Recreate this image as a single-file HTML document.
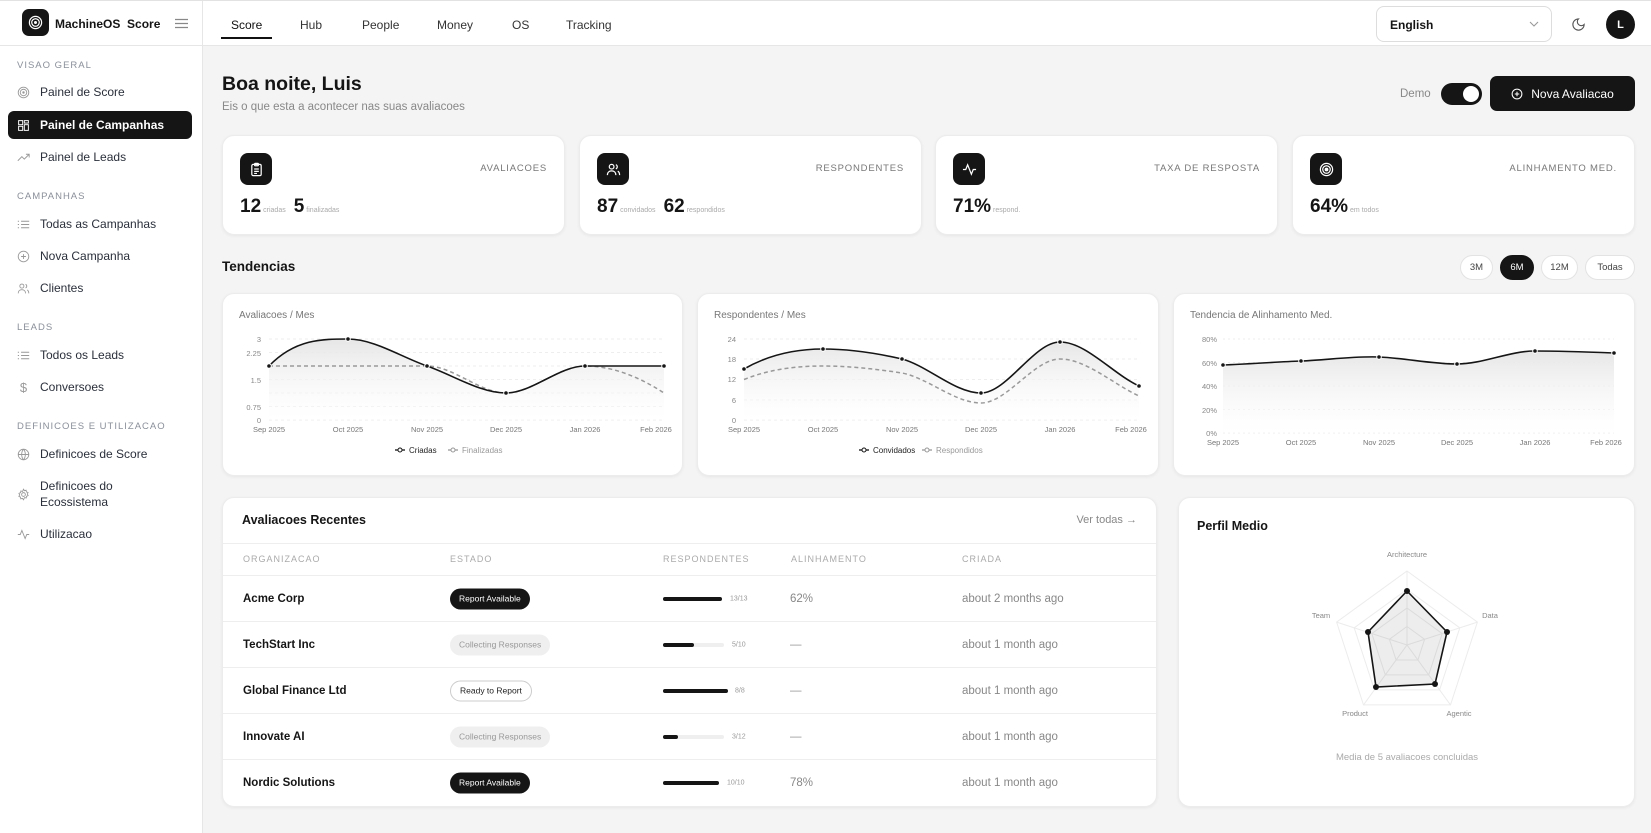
<!DOCTYPE html>
<html><head><meta charset="utf-8">
<style>
*{box-sizing:border-box;margin:0;padding:0}
body{width:1651px;height:833px;overflow:hidden;background:#f4f4f4;font-family:"Liberation Sans",sans-serif;color:#151515;position:relative}
.abs{position:absolute}
#top{left:0;top:0;width:1651px;height:46px;background:#fff;border-bottom:1px solid #e6e6e6;border-top:1px solid #e2e2e2}
#side{left:0;top:46px;width:203px;height:787px;background:#fff;border-right:1px solid #e6e6e6}
.nav{position:absolute;top:17px;font-size:12px;color:#333}
.sec{position:absolute;left:17px;font-size:9.5px;letter-spacing:1px;color:#8a8f99}
.it{position:absolute;left:17px;font-size:12px;color:#2a2f3a;display:flex;align-items:center;gap:10px;height:20px}
.it svg{width:13px;height:13px;flex:none}
.card{position:absolute;background:#fff;border-radius:12px;box-shadow:0 1px 3px rgba(0,0,0,.06);border:1px solid #ececec}
.ibox{position:absolute;left:17px;top:17px;width:32px;height:32px;border-radius:8px;background:#151515;display:flex;align-items:center;justify-content:center}
.lbl{position:absolute;right:17px;top:27px;font-size:9.5px;letter-spacing:.8px;color:#777}
.num{position:absolute;left:17px;top:60px;font-size:19px;font-weight:bold;white-space:nowrap}
.num small{font-size:7px;color:#aaa;font-weight:normal;margin:0 8px 0 2px}
.pill{position:absolute;top:255px;height:25px;border-radius:13px;border:1px solid #e3e3e3;background:#fff;font-size:9.5px;display:flex;align-items:center;justify-content:center;color:#444}
.ct{position:absolute;left:16px;top:16px;font-size:10px;color:#777}
svg text{font-family:"Liberation Sans",sans-serif}
.row{position:absolute;left:0;width:934px;height:46px;border-top:1px solid #eee;font-size:11.5px}
.row>*{position:absolute;top:50%;transform:translateY(-50%)}
.badge{height:21px;border-radius:11px;font-size:8.5px;display:flex;align-items:center;padding:0 9px;white-space:nowrap}
.b1{background:#151515;color:#fff}
.b2{background:#efefef;color:#999}
.b3{background:#fff;color:#222;border:1px solid #ccc}
.bar{height:4px;border-radius:2px;background:#efefef}
.bar i{display:block;height:4px;border-radius:2px;background:#151515}
.bl{font-size:7px;color:#999}
</style></head><body>
<div id="top" class="abs">
 <div class="abs" style="left:22px;top:8px;width:27px;height:27px;border-radius:7px;background:#151515;display:flex;align-items:center;justify-content:center">
  <svg width="15" height="15" viewBox="0 0 16 16"><circle cx="8" cy="8" r="6.5" fill="none" stroke="#fff" stroke-width="1.3"/><circle cx="8" cy="8" r="4" fill="none" stroke="#fff" stroke-width="1.3"/><circle cx="8" cy="8" r="1.6" fill="#fff"/></svg></div>
 <div class="abs" style="left:55px;top:16px;font-size:12px;font-weight:bold">MachineOS&nbsp; Score</div>
 <svg class="abs" style="left:175px;top:17px" width="13" height="11"><path d="M0 1.5h13M0 5.5h13M0 9.5h13" stroke="#888" stroke-width="1.3"/></svg>
 <div class="abs" style="left:202px;top:0;width:1px;height:46px;background:#e6e6e6"></div>
 <div class="nav" style="left:231px;color:#111">Score</div>
 <div class="abs" style="left:221px;top:36px;width:51px;height:1.5px;background:#111"></div>
 <div class="nav" style="left:300px">Hub</div>
 <div class="nav" style="left:362px">People</div>
 <div class="nav" style="left:437px">Money</div>
 <div class="nav" style="left:512px">OS</div>
 <div class="nav" style="left:566px">Tracking</div>
 <div class="abs" style="left:1376px;top:5px;width:176px;height:36px;border:1px solid #ddd;border-radius:8px;font-size:12px;font-weight:bold;padding:11px 13px">English
  <svg class="abs" style="right:12px;top:14px" width="10" height="6"><path d="M1 1l4 4 4-4" fill="none" stroke="#999" stroke-width="1.1"/></svg></div>
 <svg class="abs" style="left:1571px;top:16px" width="15" height="15" viewBox="0 0 24 24"><path d="M12 3a6 6 0 0 0 9 9 9 9 0 1 1-9-9z" fill="none" stroke="#555" stroke-width="1.8"/></svg>
 <div class="abs" style="left:1606px;top:9px;width:29px;height:29px;border-radius:50%;background:#151515;color:#fff;font-size:11px;font-weight:bold;display:flex;align-items:center;justify-content:center">L</div>
</div>

<div id="side" class="abs">
 <div class="sec" style="top:14px">VISAO GERAL</div>
 <div class="it" style="top:36px"><svg viewBox="0 0 16 16"><circle cx="8" cy="8" r="6.5" fill="none" stroke="#999" stroke-width="1.1"/><circle cx="8" cy="8" r="4" fill="none" stroke="#999" stroke-width="1.1"/><circle cx="8" cy="8" r="1.5" fill="#999"/></svg>Painel de Score</div>
 <div class="abs" style="left:8px;top:65px;width:184px;height:28px;border-radius:6px;background:#151515"></div>
 <div class="it" style="top:69px;color:#fff;font-weight:bold"><svg viewBox="0 0 16 16" fill="none" stroke="#fff" stroke-width="1.2"><rect x="2" y="2" width="5" height="5"/><rect x="9" y="2" width="5" height="3"/><rect x="9" y="7" width="5" height="7"/><rect x="2" y="9" width="5" height="5"/></svg>Painel de Campanhas</div>
 <div class="it" style="top:101px"><svg viewBox="0 0 16 16" fill="none" stroke="#999" stroke-width="1.1"><path d="M1 12l5-5 3 3 6-6M11 4h4v4"/></svg>Painel de Leads</div>
 <div class="sec" style="top:145px">CAMPANHAS</div>
 <div class="it" style="top:168px"><svg viewBox="0 0 16 16" stroke="#999" stroke-width="1.1"><path d="M5 4h10M5 8h10M5 12h10M1 4h1.5M1 8h1.5M1 12h1.5"/></svg>Todas as Campanhas</div>
 <div class="it" style="top:200px"><svg viewBox="0 0 16 16" fill="none" stroke="#999" stroke-width="1.1"><circle cx="8" cy="8" r="6.5"/><path d="M8 5v6M5 8h6"/></svg>Nova Campanha</div>
 <div class="it" style="top:232px"><svg viewBox="0 0 16 16" fill="none" stroke="#999" stroke-width="1.1"><circle cx="6" cy="5" r="2.5"/><path d="M1.5 14c0-3 2-4.5 4.5-4.5s4.5 1.5 4.5 4.5M10.5 2.8a2.5 2.5 0 0 1 0 4.6M12.5 9.8c1.3.6 2 2 2 4.2"/></svg>Clientes</div>
 <div class="sec" style="top:276px">LEADS</div>
 <div class="it" style="top:299px"><svg viewBox="0 0 16 16" stroke="#999" stroke-width="1.1"><path d="M5 4h10M5 8h10M5 12h10M1 4h1.5M1 8h1.5M1 12h1.5"/></svg>Todos os Leads</div>
 <div class="it" style="top:331px"><span style="width:13px;color:#999;font-size:13px;text-align:center">$</span>Conversoes</div>
 <div class="sec" style="top:375px">DEFINICOES E UTILIZACAO</div>
 <div class="it" style="top:398px"><svg viewBox="0 0 16 16" fill="none" stroke="#999" stroke-width="1.1"><circle cx="8" cy="8" r="6.5"/><path d="M1.5 8h13M8 1.5c-3 3.5-3 9.5 0 13M8 1.5c3 3.5 3 9.5 0 13"/></svg>Definicoes de Score</div>
 <div class="it" style="top:431px;height:34px;line-height:16px"><svg viewBox="0 0 16 16" fill="none" stroke="#999" stroke-width="1.1"><circle cx="8" cy="8" r="2.3"/><path d="M8 1.5l1.2 1.8 2-.6.4 2.1 2 .8-.9 1.9 1 1.8-2 .9-.3 2.1-2.1-.5L8 14.5l-1.3-1.7-2.1.5-.3-2.1-2-.9 1-1.8-.9-1.9 2-.8.4-2.1 2 .6z"/></svg><span>Definicoes do<br>Ecossistema</span></div>
 <div class="it" style="top:478px"><svg viewBox="0 0 16 16" fill="none" stroke="#999" stroke-width="1.1"><path d="M1 8h3l2-5 4 10 2-5h3"/></svg>Utilizacao</div>
</div>

<div class="abs" style="left:222px;top:72px;font-size:19.5px;font-weight:bold;line-height:24px">Boa noite, Luis</div>
<div class="abs" style="left:222px;top:101px;font-size:11.5px;color:#888">Eis o que esta a acontecer nas suas avaliacoes</div>
<div class="abs" style="left:1400px;top:88px;font-size:11.5px;color:#888">Demo</div>
<div class="abs" style="left:1441px;top:83px;width:41px;height:22px;border-radius:11px;background:#151515"><div class="abs" style="right:3px;top:3px;width:16px;height:16px;border-radius:50%;background:#fff"></div></div>
<div class="abs" style="left:1490px;top:76px;width:145px;height:35px;border-radius:7px;background:#151515;color:#fff;font-size:12px;display:flex;align-items:center;justify-content:center;gap:8px"><svg width="12" height="12" viewBox="0 0 16 16" fill="none" stroke="#fff" stroke-width="1.4"><circle cx="8" cy="8" r="6.5"/><path d="M8 5v6M5 8h6"/></svg>Nova Avaliacao</div>

<div class="card" style="left:222px;top:135px;width:343px;height:100px"><div class="ibox"><svg width="15" height="15" viewBox="0 0 16 16" fill="none" stroke="#fff" stroke-width="1.3"><rect x="3" y="2.5" width="10" height="12" rx="1.5"/><rect x="6" y="1.5" width="4" height="2.5" rx=".6"/><path d="M5.5 7.5h5M5.5 10h5M5.5 12.2h3"/></svg></div><div class="lbl">AVALIACOES</div><div class="num">12<small>criadas</small>5<small>finalizadas</small></div></div>
<div class="card" style="left:579px;top:135px;width:343px;height:100px"><div class="ibox"><svg width="15" height="15" viewBox="0 0 16 16" fill="none" stroke="#fff" stroke-width="1.3"><circle cx="6" cy="5" r="2.5"/><path d="M1.5 14c0-3 2-4.5 4.5-4.5s4.5 1.5 4.5 4.5M10.5 2.8a2.5 2.5 0 0 1 0 4.6M12.5 9.8c1.3.6 2 2 2 4.2"/></svg></div><div class="lbl">RESPONDENTES</div><div class="num">87<small>convidados</small>62<small>respondidos</small></div></div>
<div class="card" style="left:935px;top:135px;width:343px;height:100px"><div class="ibox"><svg width="15" height="15" viewBox="0 0 16 16" fill="none" stroke="#fff" stroke-width="1.3"><path d="M1 8h3l2-5 4 10 2-5h3"/></svg></div><div class="lbl">TAXA DE RESPOSTA</div><div class="num">71%<small>respond.</small></div></div>
<div class="card" style="left:1292px;top:135px;width:343px;height:100px"><div class="ibox"><svg width="15" height="15" viewBox="0 0 16 16" fill="none" stroke="#fff" stroke-width="1.3"><circle cx="8" cy="8" r="6.5"/><circle cx="8" cy="8" r="4"/><circle cx="8" cy="8" r="1.4" fill="#fff"/></svg></div><div class="lbl">ALINHAMENTO MED.</div><div class="num">64%<small>em todos</small></div></div>

<div class="abs" style="left:222px;top:259px;font-size:13.5px;font-weight:bold">Tendencias</div>
<div class="pill" style="left:1460px;width:33px">3M</div>
<div class="pill" style="left:1500px;width:34px;background:#151515;color:#fff;border-color:#151515">6M</div>
<div class="pill" style="left:1541px;width:37px">12M</div>
<div class="pill" style="left:1585px;width:50px">Todas</div>

<!-- chart 1 -->
<div class="card" style="left:222px;top:293px;width:461px;height:183px"><div class="ct">Avaliacoes / Mes</div>
<svg class="abs" style="left:0;top:0" width="461" height="183">
<defs><linearGradient id="g" x1="0" y1="0" x2="0" y2="1"><stop offset="0" stop-color="#e6e6e6"/><stop offset="1" stop-color="#fff" stop-opacity=".3"/></linearGradient></defs>
<g stroke="#eee" stroke-dasharray="3 3"><path d="M46 45H441M46 72H441M46 99H441M46 126H441M46 58.5H441M46 85.5H441M46 112.5H441"/></g>
<g font-size="7.5" fill="#888" text-anchor="end"><text x="38" y="48">3</text><text x="38" y="62">2.25</text><text x="38" y="89">1.5</text><text x="38" y="116">0.75</text><text x="38" y="129">0</text></g>
<path d="M46 72C72 45 99 45 125 45C151 45 178 63 204 72C230 81 257 99 283 99C309 99 336 72 362 72C388 72 415 72 441 72V126H46Z" fill="url(#g)"/>
<path d="M46 72H204C230 72 257 99 283 99C309 99 336 72 362 72C388 72 415 82 441 99" fill="none" stroke="#999" stroke-width="1.5" stroke-dasharray="4 3"/>
<path d="M46 72C72 45 99 45 125 45C151 45 178 63 204 72C230 81 257 99 283 99C309 99 336 72 362 72C388 72 415 72 441 72" fill="none" stroke="#151515" stroke-width="1.6"/>
<g fill="#151515" stroke="#fff" stroke-width="1"><circle cx="46" cy="72" r="2.3"/><circle cx="125" cy="45" r="2.3"/><circle cx="204" cy="72" r="2.3"/><circle cx="283" cy="99" r="2.3"/><circle cx="362" cy="72" r="2.3"/><circle cx="441" cy="72" r="2.3"/></g>
<g font-size="7.5" fill="#777" text-anchor="middle"><text x="46" y="138">Sep 2025</text><text x="125" y="138">Oct 2025</text><text x="204" y="138">Nov 2025</text><text x="283" y="138">Dec 2025</text><text x="362" y="138">Jan 2026</text><text x="433" y="138">Feb 2026</text></g>
<path d="M172 156h10" stroke="#151515" stroke-width="1.3"/><circle cx="177" cy="156" r="2" fill="#fff" stroke="#151515"/><text x="186" y="159" font-size="8" fill="#222">Criadas</text>
<path d="M225 156h10" stroke="#999" stroke-width="1.3"/><circle cx="230" cy="156" r="2" fill="#fff" stroke="#999"/><text x="239" y="159" font-size="8" fill="#999">Finalizadas</text>
</svg></div>

<!-- chart 2 -->
<div class="card" style="left:697px;top:293px;width:462px;height:183px"><div class="ct">Respondentes / Mes</div>
<svg class="abs" style="left:0;top:0" width="462" height="183">
<g stroke="#eee" stroke-dasharray="3 3"><path d="M46 45H441M46 65H441M46 85.5H441M46 106H441M46 126H441"/></g>
<g font-size="7.5" fill="#888" text-anchor="end"><text x="38" y="48">24</text><text x="38" y="68">18</text><text x="38" y="88">12</text><text x="38" y="109">6</text><text x="38" y="129">0</text></g>
<path d="M46 75C72 60 99 55 125 55C151 55 178 59 204 65C230 72 257 99 283 99C309 99 336 48 362 48C388 48 415 80 441 92V126H46Z" fill="url(#g)"/>
<path d="M46 85.5C72 75 99 72 125 72C151 72 178 75 204 79C230 84 257 109 283 109C309 109 336 65 362 65C388 65 415 90 441 102" fill="none" stroke="#999" stroke-width="1.5" stroke-dasharray="4 3"/>
<path d="M46 75C72 60 99 55 125 55C151 55 178 59 204 65C230 72 257 99 283 99C309 99 336 48 362 48C388 48 415 80 441 92" fill="none" stroke="#151515" stroke-width="1.6"/>
<g fill="#151515" stroke="#fff" stroke-width="1"><circle cx="46" cy="75" r="2.3"/><circle cx="125" cy="55" r="2.3"/><circle cx="204" cy="65" r="2.3"/><circle cx="283" cy="99" r="2.3"/><circle cx="362" cy="48" r="2.3"/><circle cx="441" cy="92" r="2.3"/></g>
<g font-size="7.5" fill="#777" text-anchor="middle"><text x="46" y="138">Sep 2025</text><text x="125" y="138">Oct 2025</text><text x="204" y="138">Nov 2025</text><text x="283" y="138">Dec 2025</text><text x="362" y="138">Jan 2026</text><text x="433" y="138">Feb 2026</text></g>
<path d="M161 156h10" stroke="#151515" stroke-width="1.3"/><circle cx="166" cy="156" r="2" fill="#fff" stroke="#151515"/><text x="175" y="159" font-size="8" fill="#222">Convidados</text>
<path d="M224 156h10" stroke="#999" stroke-width="1.3"/><circle cx="229" cy="156" r="2" fill="#fff" stroke="#999"/><text x="238" y="159" font-size="8" fill="#999">Respondidos</text>
</svg></div>

<!-- chart 3 -->
<div class="card" style="left:1173px;top:293px;width:462px;height:183px"><div class="ct">Tendencia de Alinhamento Med.</div>
<svg class="abs" style="left:0;top:0" width="462" height="183">
<g stroke="#eee" stroke-dasharray="2 3"><path d="M49 45H440M49 68.5H440M49 92H440M49 115.5H440M49 139H440"/></g>
<g font-size="7.5" fill="#888" text-anchor="end"><text x="43" y="48">80%</text><text x="43" y="72">60%</text><text x="43" y="95">40%</text><text x="43" y="119">20%</text><text x="43" y="142">0%</text></g>
<path d="M49 71C75 70 101 68 127 67C153 66 179 62 205 63C231 64 257 70 283 70C309 70 335 57 361 57C387 57 414 58 440 59V139H49Z" fill="url(#g)"/>
<path d="M49 71C75 70 101 68 127 67C153 66 179 62 205 63C231 64 257 70 283 70C309 70 335 57 361 57C387 57 414 58 440 59" fill="none" stroke="#151515" stroke-width="1.6"/>
<g fill="#151515" stroke="#fff" stroke-width="1"><circle cx="49" cy="71" r="2.3"/><circle cx="127" cy="67" r="2.3"/><circle cx="205" cy="63" r="2.3"/><circle cx="283" cy="70" r="2.3"/><circle cx="361" cy="57" r="2.3"/><circle cx="440" cy="59" r="2.3"/></g>
<g font-size="7.5" fill="#777" text-anchor="middle"><text x="49" y="151">Sep 2025</text><text x="127" y="151">Oct 2025</text><text x="205" y="151">Nov 2025</text><text x="283" y="151">Dec 2025</text><text x="361" y="151">Jan 2026</text><text x="432" y="151">Feb 2026</text></g>
</svg></div>

<!-- table -->
<div class="card" style="left:222px;top:497px;width:935px;height:310px;overflow:hidden">
 <div class="abs" style="left:19px;top:15px;font-size:12.5px;font-weight:bold">Avaliacoes Recentes</div>
 <div class="abs" style="right:19px;top:16px;font-size:11px;color:#888">Ver todas →</div>
 <div class="abs" style="left:0;top:45px;width:935px;height:1px;background:#eee"></div>
 <div class="abs" style="top:56px;left:20px;font-size:9px;letter-spacing:1px;color:#aaa">ORGANIZACAO</div>
 <div class="abs" style="top:56px;left:227px;font-size:9px;letter-spacing:1px;color:#aaa">ESTADO</div>
 <div class="abs" style="top:56px;left:440px;font-size:9px;letter-spacing:1px;color:#aaa">RESPONDENTES</div>
 <div class="abs" style="top:56px;left:568px;font-size:9px;letter-spacing:1px;color:#aaa">ALINHAMENTO</div>
 <div class="abs" style="top:56px;left:739px;font-size:9px;letter-spacing:1px;color:#aaa">CRIADA</div>

 <div class="row" style="top:77px"><b style="left:20px;font-weight:bold">Acme Corp</b><div class="badge b1" style="left:227px">Report Available</div><div class="bar" style="left:440px;width:59px"><i style="width:59px"></i></div><span class="bl" style="left:507px">13/13</span><span style="left:567px;color:#888">62%</span><span style="left:739px;color:#888">about 2 months ago</span></div>
 <div class="row" style="top:123px"><b style="left:20px">TechStart Inc</b><div class="badge b2" style="left:227px">Collecting Responses</div><div class="bar" style="left:440px;width:61px"><i style="width:31px"></i></div><span class="bl" style="left:509px">5/10</span><span style="left:567px;color:#999">—</span><span style="left:739px;color:#888">about 1 month ago</span></div>
 <div class="row" style="top:169px"><b style="left:20px">Global Finance Ltd</b><div class="badge b3" style="left:227px">Ready to Report</div><div class="bar" style="left:440px;width:65px"><i style="width:65px"></i></div><span class="bl" style="left:512px">8/8</span><span style="left:567px;color:#999">—</span><span style="left:739px;color:#888">about 1 month ago</span></div>
 <div class="row" style="top:215px"><b style="left:20px">Innovate AI</b><div class="badge b2" style="left:227px">Collecting Responses</div><div class="bar" style="left:440px;width:61px"><i style="width:15px"></i></div><span class="bl" style="left:509px">3/12</span><span style="left:567px;color:#999">—</span><span style="left:739px;color:#888">about 1 month ago</span></div>
 <div class="row" style="top:261px"><b style="left:20px">Nordic Solutions</b><div class="badge b1" style="left:227px">Report Available</div><div class="bar" style="left:440px;width:56px"><i style="width:56px"></i></div><span class="bl" style="left:504px">10/10</span><span style="left:567px;color:#888">78%</span><span style="left:739px;color:#888">about 1 month ago</span></div>
</div>

<!-- radar -->
<div class="card" style="left:1178px;top:497px;width:457px;height:310px">
 <div class="abs" style="left:18px;top:21px;font-size:12.5px;font-weight:bold">Perfil Medio</div>
 <svg class="abs" style="left:0;top:0" width="457" height="310">
  <g transform="translate(228,147)" fill="none" stroke="#ececec" stroke-width="1">
   <polygon points="0,-74 70.4,-22.9 43.5,59.9 -43.5,59.9 -70.4,-22.9"/>
   <polygon points="0,-55.5 52.8,-17.2 32.6,44.9 -32.6,44.9 -52.8,-17.2"/>
   <polygon points="0,-37 35.2,-11.4 21.7,29.9 -21.7,29.9 -35.2,-11.4"/>
   <polygon points="0,-18.5 17.6,-5.7 10.9,15 -10.9,15 -17.6,-5.7"/>
   <path d="M0 0V-74M0 0L70.4 -22.9M0 0L43.5 59.9M0 0L-43.5 59.9M0 0L-70.4 -22.9"/>
   <polygon points="0,-54 40,-13 28,39 -31,42 -39,-13" fill="rgba(0,0,0,.07)" stroke="#151515" stroke-width="1.6"/>
   <g fill="#151515" stroke="none"><circle cx="0" cy="-54" r="3"/><circle cx="40" cy="-13" r="3"/><circle cx="28" cy="39" r="3"/><circle cx="-31" cy="42" r="3"/><circle cx="-39" cy="-13" r="3"/></g>
  </g>
  <g font-size="7.5" fill="#888" text-anchor="middle"><text x="228" y="59">Architecture</text><text x="311" y="120">Data</text><text x="280" y="218">Agentic</text><text x="176" y="218">Product</text><text x="142" y="120">Team</text></g>
  <text x="228" y="262" font-size="9.5" fill="#aaa" text-anchor="middle">Media de 5 avaliacoes concluidas</text>
 </svg>
</div>
</body></html>
